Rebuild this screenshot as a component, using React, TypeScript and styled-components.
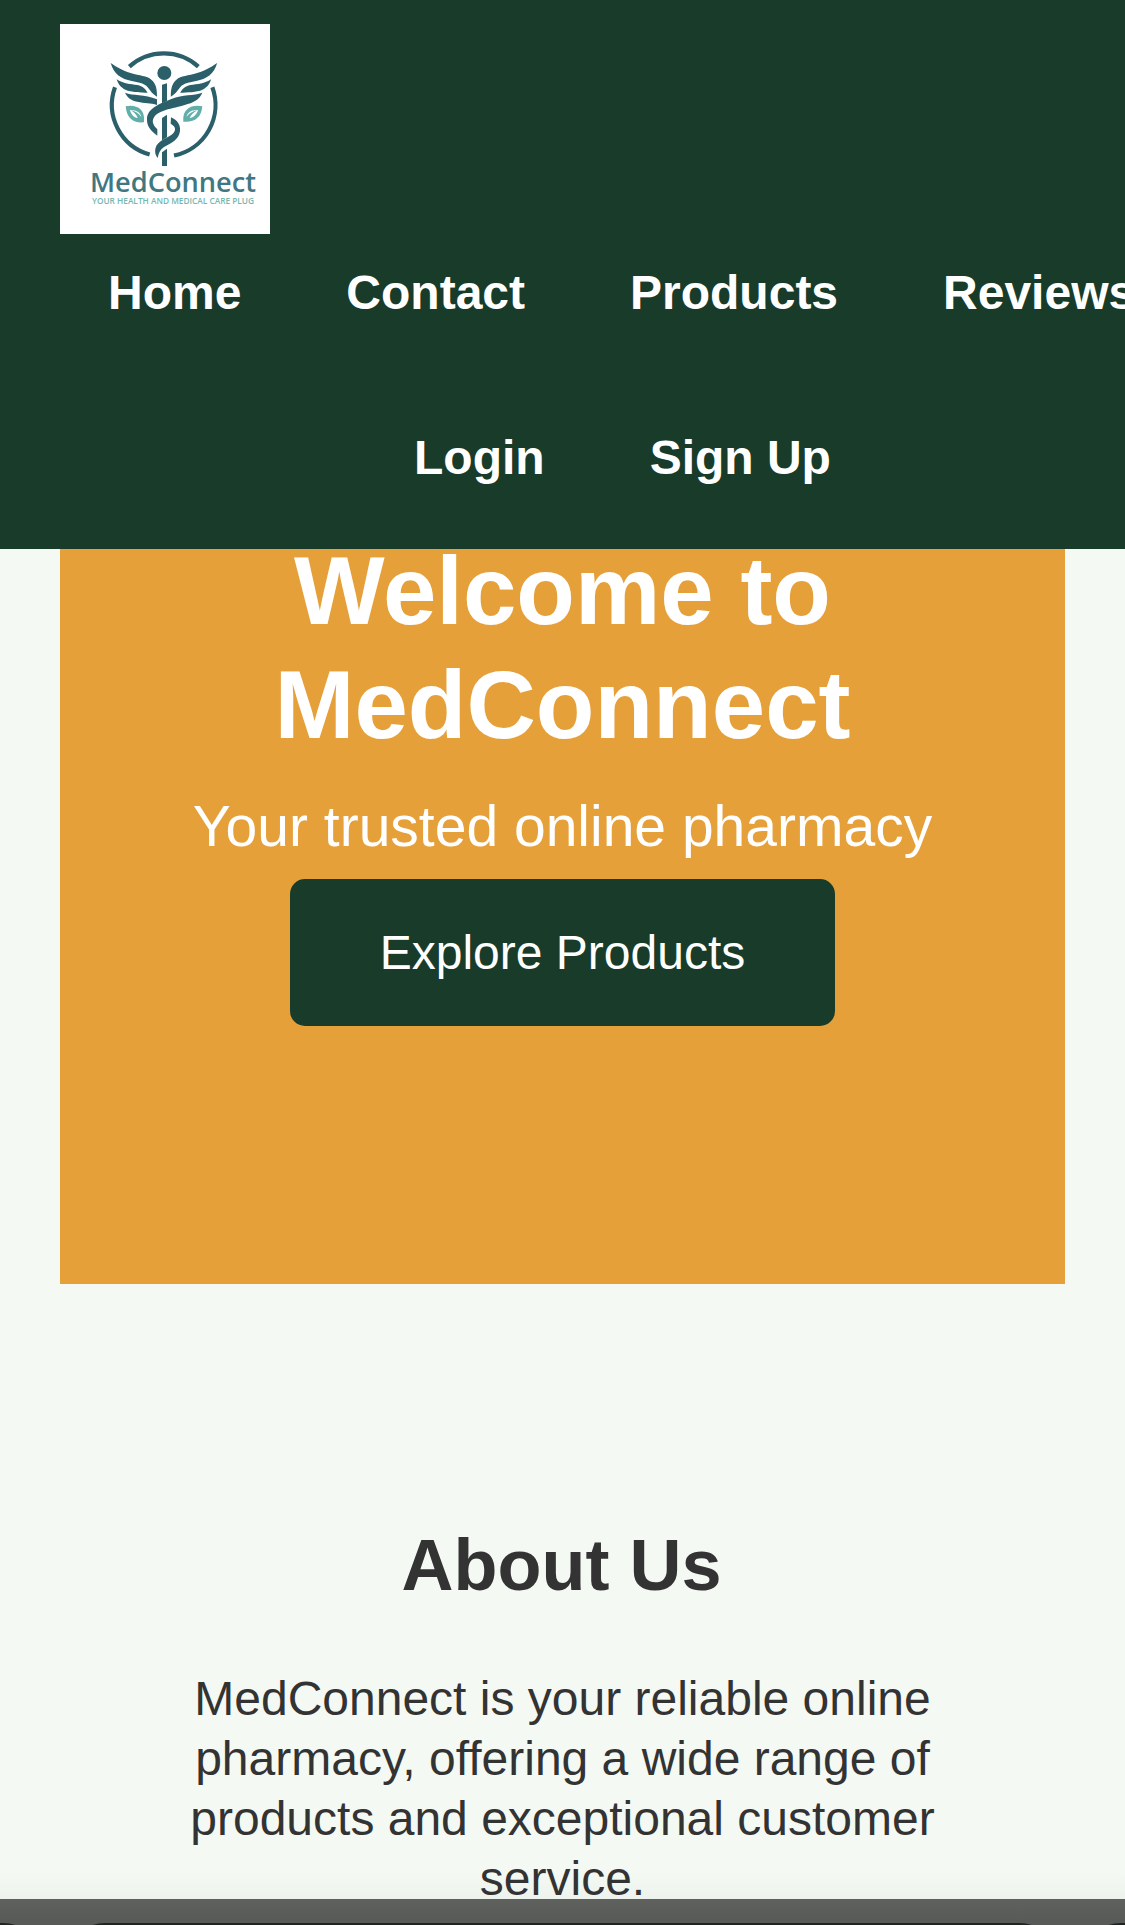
import React from 'react';
import styled, { createGlobalStyle } from 'styled-components';

const GlobalStyle = createGlobalStyle`
  * { box-sizing: border-box; }
  body {
    margin: 0;
    overflow: hidden;
    background: #f4f9f4;
    color: #333;
    font-family: "Liberation Sans", Arial, Helvetica, sans-serif;
  }
  h1, h2, p, ul { margin: 0; padding: 0; }
`;

const Page = styled.div`
  height: 1925px;
  overflow: hidden;
`;

const Header = styled.header`
  position: fixed;
  inset: 0 0 auto 0;
  z-index: 2;
  height: 549px;
  padding: 24px 60px 0;
  overflow: hidden;
  background: #183b2a;
`;

const Logo = styled.svg`
  display: block;
  width: 210px;
  height: 210px;
  background: #fff;
`;

const Nav = styled.nav`
  display: flex;
  flex-direction: column;
  gap: 105px;
  padding-top: 29px;
`;

const NavRow = styled.ul<{ $indent: number }>`
  display: flex;
  gap: 105px;
  padding-left: ${(p) => p.$indent}px;
  list-style: none;
`;

const NavLink = styled.a`
  display: block;
  color: #fff;
  font-size: 48px;
  font-weight: 700;
  line-height: 60px;
  white-space: nowrap;
`;

const Main = styled.main`
  padding: 284px 60px 0;
`;

const Hero = styled.section`
  display: flex;
  flex-direction: column;
  align-items: center;
  height: 1000px;
  padding-top: 250px;
  background: #e5a03a;
  color: #fff;
  text-align: center;
`;

const HeroTitle = styled.h1`
  max-width: 800px;
  font-size: 96px;
  line-height: 114px;
`;

const HeroText = styled.p`
  margin-top: 30px;
  font-size: 57px;
  line-height: 68px;
`;

const HeroButton = styled.a`
  margin-top: 19px;
  width: 545px;
  height: 147px;
  border-radius: 15px;
  background: #183b2a;
  font-size: 48px;
  line-height: 147px;
`;

const About = styled.section`
  display: flex;
  flex-direction: column;
  align-items: center;
  padding-top: 238px;
  text-align: center;
`;

const AboutTitle = styled.h2`
  padding-right: 2px;
  font-size: 72px;
  line-height: 86px;
`;

const AboutText = styled.p`
  width: 765px;
  margin-top: 61px;
  font-size: 48px;
  line-height: 60px;
`;

const BottomFade = styled.div`
  position: fixed;
  inset: auto 0 26px 0;
  height: 26px;
  background: linear-gradient(rgba(60, 70, 60, 0), rgba(60, 70, 60, 0.035));
`;

const BrowserBar = styled.div`
  position: fixed;
  inset: auto 0 0 0;
  z-index: 3;
  display: flex;
  justify-content: space-between;
  height: 26px;
  padding-top: 24px;
  overflow: hidden;
  background: linear-gradient(#5e615d, #575957);
`;

const BarField = styled.div<{ $width: number; $side?: 'left' | 'right' }>`
  width: ${(p) => p.$width}px;
  height: 60px;
  border-radius: ${(p) =>
    p.$side === 'left' ? '0 40px 0 0' : p.$side === 'right' ? '40px 0 0 0' : '40px 40px 0 0'};
  background: #1f2321;
`;

const primaryLinks = ['Home', 'Contact', 'Products', 'Reviews'];
const accountLinks = ['Login', 'Sign Up'];

/* One wing; the emblem mirrors it around the staff. */
function Wing() {
  return (
    <>
      <path d="M182 147C200 160 225 173 252 180C278 186 297 187 309 202C320 215 321 232 321 248C309 242 302 232 293 220C283 207 264 205 245 201C214 195 191 180 182 147Z" />
      <path d="M200 196C219 209 242 211 262 213C279 216 287 226 293 236C271 235 245 235 226 227C211 220 204 209 200 196Z" />
    </>
  );
}

function MedConnectLogo() {
  return (
    <Logo viewBox="30 30 630 630" role="img" aria-label="MedConnect">
      <g fill="none" stroke="#2b606b" strokeWidth="12.5">
        <path d="M238 158A154.5 154.5 0 0 1 445 158" />
        <path d="M487 220A154.5 154.5 0 0 1 372 424.5" />
        <path d="M195 220A154.5 154.5 0 0 0 299 421.5" />
      </g>
      <g fill="#2b606b">
        <circle cx="343" cy="177" r="21" />
        <Wing />
        <g transform="translate(683.5 0) scale(-1 1)">
          <Wing />
        </g>
        <path d="M225 236C248 246 284 239 321 256V273C301 266 284 268 262 263C242 259 231 249 225 236Z" />
        <path d="M336 212L351 208V261L336 268Z" />
        <path d="M336 312L351 302V370L336 379Z" />
        <path d="M336 415L351 404V456H336Z" />
        <path d="M457 236C430 246 399 240 364 255C326 271 292 283 291 315C290 338 304 352 322 365V346C310 334 305 323 311 312C324 286 379 283 413 270C438 263 451 251 457 236Z" />
        <path d="M363 310C383 319 392 333 390 351C387 377 362 388 341 400C330 407 326 418 323 432C314 421 313 407 320 394C333 373 368 368 374 351C378 341 371 334 362 329Z" />
      </g>
      <g fill="#62afa9" fillRule="evenodd">
        <path d="M227 277C256 271 287 282 282 325C250 328 230 313 227 277ZM240 288C243 301 252 311 263 312C260 302 251 295 243 289C257 292 268 300 274 309C272 296 259 287 240 288Z" />
        <path d="M457 277C428 271 396 282 400 323C432 326 454 313 457 277ZM444 288C424 287 412 296 410 308C416 300 427 292 441 289C431 296 423 303 419 312C430 311 441 301 444 288Z" />
      </g>
      <text x="120" y="535" fill="#417780" fontFamily="'Open Sans', 'Noto Sans', sans-serif" fontSize="80" fontWeight="600" textLength="498" lengthAdjust="spacingAndGlyphs">
        MedConnect
      </text>
      <text x="126" y="570" fill="#74b7b1" fontFamily="'Open Sans', 'Noto Sans', sans-serif" fontSize="26.5" fontWeight="600" textLength="486" lengthAdjust="spacingAndGlyphs">
        YOUR HEALTH AND MEDICAL CARE PLUG
      </text>
    </Logo>
  );
}

export default function App() {
  return (
    <Page>
      <GlobalStyle />
      <Header>
        <MedConnectLogo />
        <Nav>
          <NavRow $indent={48}>
            {primaryLinks.map((label) => (
              <li key={label}><NavLink>{label}</NavLink></li>
            ))}
          </NavRow>
          <NavRow $indent={354}>
            {accountLinks.map((label) => (
              <li key={label}><NavLink>{label}</NavLink></li>
            ))}
          </NavRow>
        </Nav>
      </Header>
      <Main>
        <Hero>
          <HeroTitle>Welcome to MedConnect</HeroTitle>
          <HeroText>Your trusted online pharmacy</HeroText>
          <HeroButton>Explore Products</HeroButton>
        </Hero>
        <About>
          <AboutTitle>About Us</AboutTitle>
          <AboutText>
            MedConnect is your reliable online pharmacy, offering a wide range of products and
            exceptional customer service.
          </AboutText>
        </About>
      </Main>
      <BottomFade />
      <BrowserBar>
        <BarField $width={43} $side="left" />
        <BarField $width={994} />
        <BarField $width={44} $side="right" />
      </BrowserBar>
    </Page>
  );
}
